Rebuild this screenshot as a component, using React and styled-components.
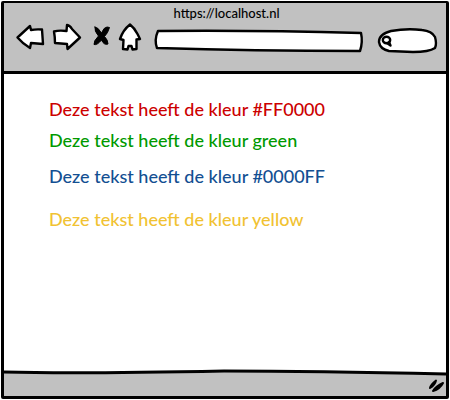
import React from "react";
import styled, { createGlobalStyle } from "styled-components";

const GlobalStyle = createGlobalStyle`
  * { box-sizing: border-box; }
  body {
    margin: 0;
    background: #fff;
    font-family: Lato, "Open Sans", sans-serif;
  }
`;

const Page = styled.div`
  display: flex;
  min-height: 100vh;
  padding: 1px;
`;

const BrowserWindow = styled.div`
  flex: 1;
  display: flex;
  flex-direction: column;
  min-width: 0;
  border: 3px solid #000;
  border-top-width: 2px;
  border-radius: 2px;
`;

const Header = styled.header`
  padding: 0 9px 19px 12px;
  background: #c1c1c1;
  border-bottom: 3px solid #000;
`;

const Title = styled.h1`
  margin: 0;
  padding-top: 1px;
  font-size: 13px;
  line-height: 18px;
  font-weight: 500;
  text-align: center;
  color: #000;
`;

const Toolbar = styled.div`
  display: flex;
  align-items: center;
  height: 30px;
`;

const NavButtons = styled.nav`
  display: flex;
  align-items: center;
  gap: 8px;
  margin-right: 12px;
`;

const IconButton = styled.button`
  display: flex;
  padding: 0;
  border: 0;
  background: none;
`;

const Sketch = styled.svg`
  display: block;
  overflow: visible;
  fill: ${(p) => p.$fill || "#fff"};
  stroke: #000;
  stroke-width: ${(p) => p.$weight || 2.4};
  stroke-linejoin: round;
  stroke-linecap: round;
`;

const Field = styled.label`
  position: relative;
  display: flex;
  align-items: center;
  min-width: 0;
  height: 24px;
  margin-top: 8px;
  flex: ${(p) => (p.$wide ? "1" : "0 0 60px")};
  margin-left: ${(p) => (p.$wide ? "0" : "15px")};
`;

const FieldOutline = styled(Sketch)`
  position: absolute;
  inset: 0;
  width: 100%;
  height: 100%;
  path { vector-effect: non-scaling-stroke; }
`;

const SearchIcon = styled(Sketch)`
  position: relative;
  flex: none;
  margin-left: 4px;
`;

const TextInput = styled.input`
  position: relative;
  flex: 1;
  min-width: 0;
  height: 16px;
  margin: 0 6px;
  padding: 0;
  border: 0;
  outline: 0;
  background: transparent;
  font: inherit;
  font-size: 12px;
`;

const Content = styled.main`
  flex: 1;
  padding: 25px 45px;
  background: #fff;
`;

const ColorLine = styled.p`
  margin: 0 0 ${(p) => p.$gap}px;
  font-size: 18px;
  line-height: 20px;
  font-weight: 500;
  color: ${(p) => p.$color};
`;

const StatusBar = styled.footer`
  position: relative;
  display: flex;
  justify-content: flex-end;
  align-items: center;
  height: 24px;
  padding: 4px 1px 0 0;
  background: #c1c1c1;
`;

const StatusEdge = styled(Sketch)`
  position: absolute;
  top: -2px;
  left: 0;
  width: 100%;
  height: 6px;
  stroke-linecap: butt;
  path { vector-effect: non-scaling-stroke; }
`;

const LINES = [
  { name: "#FF0000", color: "#cc0000", gap: 11 },
  { name: "green", color: "#009900", gap: 16 },
  { name: "#0000FF", color: "#134f92", gap: 23 },
  { name: "yellow", color: "#f1c232", gap: 0 },
];

export default function App() {
  return (
    <Page>
      <GlobalStyle />
      <BrowserWindow>
        <Header>
          <Title>https://localhost.nl</Title>
          <Toolbar>
            <NavButtons aria-label="Browser">
              <IconButton aria-label="Back">
                <Sketch width="28" height="28" viewBox="0 0 28 28">
                  <path d="M1.5 14.5 L14 3 L15 7 Q20 6 26 6.5 L27 21 L15 20 L14 25 Q7 21 1.5 14.5Z" />
                </Sketch>
              </IconButton>
              <IconButton aria-label="Forward">
                <Sketch width="28" height="28" viewBox="0 0 28 28">
                  <path d="M2 8.5 Q7 7 14.5 8 L15 2 Q18 2.5 20 6 L28 14.5 L15.5 26 L15 21 L3 20 Q3 14 2 8.5Z" />
                </Sketch>
              </IconButton>
              <IconButton aria-label="Stop">
                <Sketch width="22" height="28" viewBox="0 0 22 28" $fill="#000" $weight={1}>
                  <path d="M7 4 Q10 4 13.5 10 Q16 4 19 4 L21.5 4.5 Q20 10 16.5 13.5 Q20 17 20 21 Q16 22.5 13.5 17 Q9 22.5 6 21.500 Q5.500 18 10.500 13 Q6 8 7 4Z" />
                </Sketch>
              </IconButton>
              <IconButton aria-label="Home">
                <Sketch width="24" height="28" viewBox="0 0 24 28">
                  <path d="M12 1.500 Q16.500 5 19.500 11 L22 16 L18.500 16.500 L18.500 26 L14.500 26.500 L13.500 23 L10.500 23 L9.500 26.500 L5 26 L5.500 17 L2 16 Q5 7 12 1.500Z" />
                </Sketch>
              </IconButton>
            </NavButtons>
            <Field $wide>
              <FieldOutline viewBox="0 0 210 24" preserveAspectRatio="none" aria-hidden="true">
                <path d="M4 2 Q100 1 209 4 Q211 13 208 22 Q100 22 3 19 Q0 11 4 2Z" />
              </FieldOutline>
              <TextInput type="text" aria-label="Address" />
            </Field>
            <Field>
              <FieldOutline viewBox="0 0 60 24" preserveAspectRatio="none" aria-hidden="true">
                <path d="M14 2 Q30 -1 45 1 Q55 2 58 8 Q60 15 58 19 Q52 23 36 23 L12 22 Q3 20 2 13 Q2 5 14 2Z" />
              </FieldOutline>
              <SearchIcon width="11" height="12" viewBox="0 0 11 12" aria-hidden="true">
                <ellipse cx="5.5" cy="5" rx="3.7" ry="3.2" />
                <path d="M6 8 L9.5 10.5 M8 7 L9.5 10.5" />
              </SearchIcon>
              <TextInput type="search" aria-label="Search" />
            </Field>
          </Toolbar>
        </Header>
        <Content>
          {LINES.map((line) => (
            <ColorLine key={line.name} $color={line.color} $gap={line.gap}>
              Deze tekst heeft de kleur {line.name}
            </ColorLine>
          ))}
        </Content>
        <StatusBar>
          <StatusEdge viewBox="0 0 442 6" preserveAspectRatio="none" aria-hidden="true">
            <path stroke="none" d="M0 -1 H442 V4 Q310 1 220 1 Q70 4 0 2Z" />
            <path fill="none" strokeWidth="3" d="M0 2 Q70 4 220 1 Q310 1 442 4" />
          </StatusEdge>
          <Sketch width="17" height="14" viewBox="0 0 17 14" $fill="#000" $weight={2} aria-hidden="true">
            <path d="M2 9 Q3 5 8 1.500 Q7 6 2 9Z" />
            <path d="M5 12 Q8 7 15 4 Q12 10 5 12Z" />
          </Sketch>
        </StatusBar>
      </BrowserWindow>
    </Page>
  );
}
